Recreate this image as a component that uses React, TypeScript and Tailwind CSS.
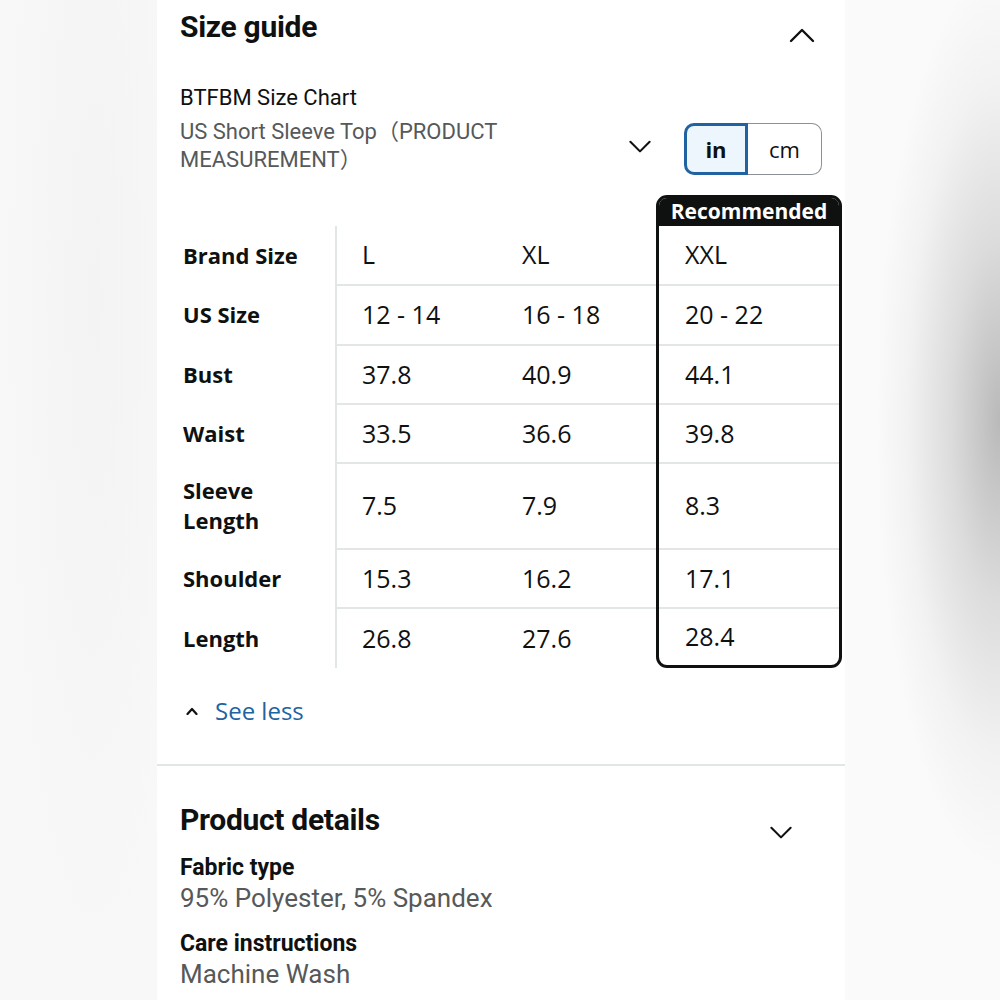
import React from "react";

const rows = [
  { label: "Brand Size", values: ["L", "XL", "XXL"], h: "h-[58px]" },
  { label: "US Size", values: ["12 - 14", "16 - 18", "20 - 22"], h: "h-[60px]" },
  { label: "Bust", values: ["37.8", "40.9", "44.1"], h: "h-[59px]" },
  { label: "Waist", values: ["33.5", "36.6", "39.8"], h: "h-[59px]" },
  { label: "Sleeve\nLength", values: ["7.5", "7.9", "8.3"], h: "h-[86px]" },
  { label: "Shoulder", values: ["15.3", "16.2", "17.1"], h: "h-[59px]" },
  { label: "Length", values: ["26.8", "27.6", "28.4"], h: "h-[61px]" },
];

const Chevron = ({ up = false, className = "" }: { up?: boolean; className?: string }) => (
  <svg viewBox="0 0 26 16" className={className} fill="none" stroke="#111" strokeWidth="2.4" strokeLinecap="round" strokeLinejoin="round">
    {up ? <polyline points="2,14 13,3 24,14" /> : <polyline points="2,2 13,13 24,2" />}
  </svg>
);

const SizeGuide: React.FC = () => {
  return (
    <div className="flex min-h-[1000px] w-full bg-[#f7f7f8]" style={{ fontFamily: "'Open Sans', 'Noto Sans CJK SC', sans-serif" }}>
      <div className="w-[157px] shrink-0 bg-[radial-gradient(ellipse_at_60%_30%,#f3f3f4_0%,#f8f8f9_70%)]" />
      <div className="w-[688px] shrink-0 bg-white text-[#0f1111]">
        {/* Size guide */}
        <div className="pl-[23px] pr-[3px] pt-[9px]">
          <div className="flex items-start justify-between">
            <h2 className="text-[30px] font-bold leading-[36px] tracking-[-0.3px]" style={{ fontFamily: "Roboto, sans-serif" }}>
              Size guide
            </h2>
            <Chevron up className="mr-[27px] mt-[18px] h-[16px] w-[26px]" />
          </div>

          <div className="mt-[39px] text-[22px] leading-[28px]" style={{ fontFamily: "Roboto, 'Noto Sans CJK SC', sans-serif" }}>
            BTFBM Size Chart
          </div>
          <div className="mt-[6px] flex items-start">
            <div className="w-[400px] text-[22px] leading-[28px] text-[#565959]" style={{ fontFamily: "Roboto, 'Noto Sans CJK SC', sans-serif" }}>
              US Short Sleeve Top（PRODUCT
              <br />
              MEASUREMENT）
            </div>
            <Chevron className="ml-[48px] mt-[22px] h-[14px] w-[24px]" />
            <div className="ml-[32px] mt-[5px] flex h-[52px] w-[138px] text-[22px]">
              <div className="flex w-[64px] items-center justify-center rounded-l-[10px] border-[3px] border-[#2162a1] bg-[#edf6fc] font-bold">
                in
              </div>
              <div className="flex flex-1 items-center justify-center rounded-r-[10px] border-[1.5px] border-l-0 border-[#8d9096]">
                cm
              </div>
            </div>
          </div>

          {/* Table */}
          <div className="mt-[20px] flex">
            <div className="mt-[31px] grid w-[476px] grid-cols-[155px_160px_161px]">
              {rows.map((r, i) => (
                <React.Fragment key={r.label}>
                  <div className={`flex items-center whitespace-pre-line pl-[3px] text-[22px] font-bold leading-[30px] ${r.h}`}>
                    {r.label}
                  </div>
                  <div className={`flex items-center border-l-[2px] border-[#e3e6e6] pl-[25px] text-[25px] ${r.h} ${i > 0 ? "border-t-[2px]" : ""}`}>
                    {r.values[0]}
                  </div>
                  <div className={`flex items-center border-[#e3e6e6] pl-[27px] text-[25px] ${r.h} ${i > 0 ? "border-t-[2px]" : ""}`}>
                    {r.values[1]}
                  </div>
                </React.Fragment>
              ))}
            </div>
            <div className="flex w-[187px] flex-col overflow-hidden rounded-[11px] border-[3px] border-[#0f1111]">
              <div className="flex h-[28px] items-center justify-center bg-[#0f1111] text-[21px] font-bold text-white">
                Recommended
              </div>
              {rows.map((r, i) => (
                <div
                  key={r.label}
                  className={`flex items-center border-[#e3e6e6] pl-[26px] text-[25px] ${i === rows.length - 1 ? "h-[58px]" : r.h} ${i > 0 ? "border-t-[2px]" : ""}`}
                >
                  {r.values[2]}
                </div>
              ))}
            </div>
          </div>

          <div className="mt-[28px] flex items-center pl-[6px]">
            <svg viewBox="0 0 12 8" className="h-[8px] w-[12px]" fill="none" stroke="#111" strokeWidth="2.2" strokeLinecap="round" strokeLinejoin="round">
              <polyline points="1.5,7 6,2 10.5,7" />
            </svg>
            <span className="ml-[17px] text-[24px] leading-[30px] text-[#2162a1]">See less</span>
          </div>
        </div>

        <div className="mt-[38px] h-[2px] bg-[#e3e6e6]" />

        {/* Product details */}
        <div className="pl-[23px] pr-[3px] pt-[36px]" style={{ fontFamily: "Roboto, sans-serif" }}>
          <div className="flex items-start justify-between">
            <h2 className="text-[30px] font-bold leading-[36px] tracking-[-0.3px]">Product details</h2>
            <Chevron className="mr-[48px] mt-[24px] h-[14px] w-[26px]" />
          </div>
          <div className="mt-[13px] text-[23px] font-bold leading-[30px]">Fabric type</div>
          <div className="text-[26px] leading-[30px] text-[#565959]">95% Polyester, 5% Spandex</div>
          <div className="mt-[16px] text-[23px] font-bold leading-[30px]">Care instructions</div>
          <div className="text-[26px] leading-[30px] text-[#565959]">Machine Wash</div>
        </div>
      </div>
      <div className="flex-1 bg-[radial-gradient(ellipse_80%_45%_at_100%_42%,#b9b9b9_0%,#dcdcdc_40%,#f2f2f3_75%,#fafafa_100%)]" />
    </div>
  );
};

export default SizeGuide;
